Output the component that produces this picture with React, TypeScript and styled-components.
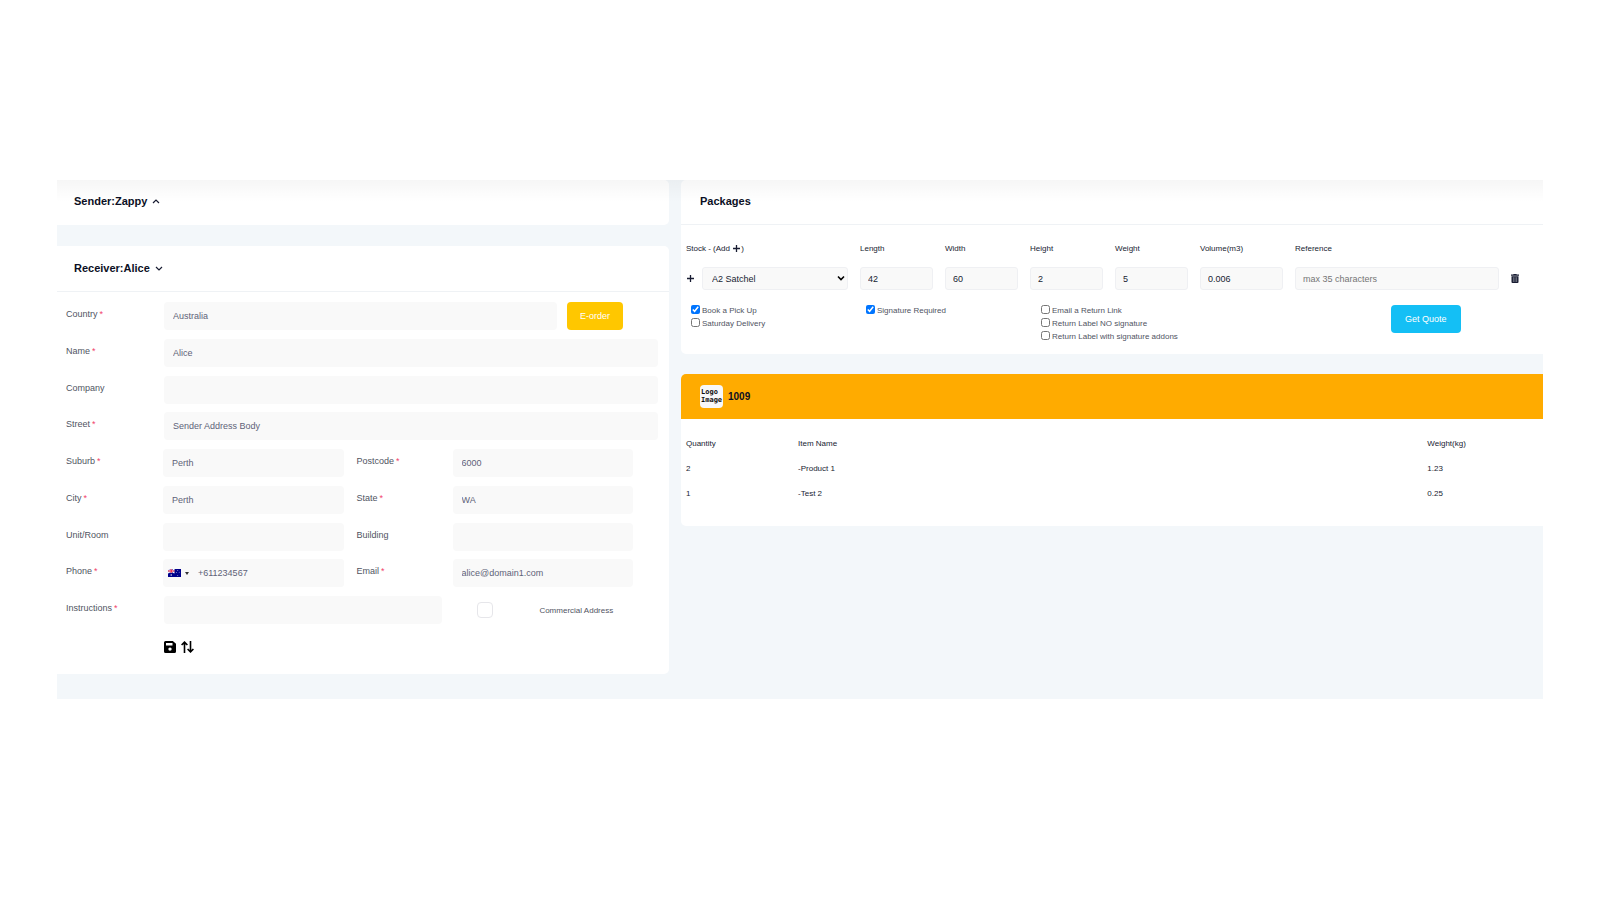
import React from 'react';
import styled, { createGlobalStyle } from 'styled-components';

const Global = createGlobalStyle`
  *, *::before, *::after { box-sizing: border-box; }
  body { margin: 0; background: #fff; font-family: "Liberation Sans", Arial, sans-serif; color: #181c32; }
  input, button, select { font-family: inherit; margin: 0; }
`;

const Page = styled.main`
  padding: 180px 57px 24px;
`;

const Board = styled.div`
  position: relative;
  display: grid;
  grid-template-columns: 612fr 862fr;
  align-items: start;
  gap: 12px;
  padding-bottom: 25px;
  background: #f3f7fa;
  &::before {
    content: "";
    position: absolute;
    inset: 0 0 auto 0;
    height: 22px;
    pointer-events: none;
    background: linear-gradient(rgba(0, 0, 0, 0.035), rgba(0, 0, 0, 0));
  }
`;

const Column = styled.div<{ $gap: number }>`
  display: flex;
  flex-direction: column;
  gap: ${(p) => p.$gap}px;
  min-width: 0;
`;

const Card = styled.section<{ $side: 'left' | 'right' }>`
  background: #fff;
  overflow: hidden;
  border-radius: ${(p) => (p.$side === 'left' ? '0 5px 5px 0' : '5px 0 0 5px')};
`;

const CardHeader = styled.header<{ $line?: boolean; $accent?: boolean; $inset?: number }>`
  display: flex;
  align-items: center;
  gap: 5px;
  min-height: 45px;
  padding: 0 ${(p) => p.$inset ?? 17}px ${(p) => (p.$accent ? 0 : 3)}px;
  background: ${(p) => (p.$accent ? '#ffab00' : 'transparent')};
  border-bottom: ${(p) => (p.$line ? '1px solid #eff2f5' : '0')};
`;

const ReceiverHeader = styled(CardHeader)`
  min-height: 46px;
  padding-bottom: 1px;
`;

const Title = styled.h2`
  margin: 0;
  font-size: 11px;
  line-height: 16px;
  font-weight: 700;
  color: #0b0f24;
`;

const IconButton = styled.button`
  display: inline-flex;
  align-items: center;
  justify-content: center;
  padding: 0;
  border: 0;
  background: none;
  color: #181c32;
`;

const Form = styled.form`
  display: flex;
  flex-direction: column;
  padding: 10px 11px 21px 9px;
`;

const Rows = styled.div`
  display: grid;
  align-content: space-between;
  min-height: 322px;
`;

const WideRow = styled.div`
  display: grid;
  grid-template-columns: 98px 1fr;
  height: 28px;
`;

const SplitRow = styled.div`
  display: grid;
  grid-template-columns: 97px 1fr 13px 96px 1fr;
  height: 28px;
  padding-right: 25px;
  & > :nth-child(3) { grid-column: 4; }
`;

const CountryLine = styled.div`
  display: grid;
  grid-template-columns: 393fr 91fr;
  gap: 10px;
`;

const InstructionLine = styled.div`
  display: grid;
  grid-template-columns: 279fr 181fr;
  gap: 35px;
`;

const Label = styled.label`
  font-size: 9px;
  line-height: 12px;
  padding-top: 6px;
  color: #50545f;
`;

const Star = styled.span`
  color: #f1416c;
  margin-left: 2px;
`;

const TextInput = styled.input`
  width: 100%;
  min-width: 0;
  height: 28px;
  padding: 0 9px;
  border: 0;
  border-radius: 4px;
  background: #f9f9f9;
  color: #5e6278;
  font-size: 9px;
  outline: 0;
`;

const PhoneBox = styled.div`
  display: flex;
  align-items: center;
  padding-left: 5px;
  border-radius: 4px;
  background: #f9f9f9;
`;

const FlagButton = styled(IconButton)`
  gap: 4px;
  flex: none;
`;

const SolidButton = styled.button<{ $color: string }>`
  height: 28px;
  padding: 0 13px;
  justify-self: start;
  border: 0;
  border-radius: 4px;
  background: ${(p) => p.$color};
  color: #fff;
  font-size: 9px;
`;

const QuoteButton = styled(SolidButton)`
  padding: 0 14px;
  margin-top: 1px;
`;

const CommercialLabel = styled.label`
  display: flex;
  align-items: center;
  gap: 46px;
  font-size: 8px;
  color: #50545f;
  white-space: nowrap;
`;

const SoftCheck = styled.input`
  appearance: none;
  width: 16px;
  height: 16px;
  margin: 0;
  border: 1px solid #e6e6ea;
  border-radius: 4px;
  background: #fff;
`;

const Actions = styled.div`
  display: flex;
  align-items: center;
  gap: 5px;
  padding: 17px 0 0 98px;
  & button { color: #000; }
`;

const PackageForm = styled.form`
  padding: 17px 24px 11px 5px;
`;

const PackageRow = styled.div`
  display: grid;
  grid-template-columns: 162fr 73fr 73fr 73fr 73fr 83fr 204fr 8px;
  gap: 12px;
  align-items: end;
`;

const Field = styled.div`
  display: flex;
  flex-direction: column;
  gap: 13px;
  min-width: 0;
`;

const FieldLabel = styled.label`
  display: flex;
  align-items: center;
  height: 12px;
  font-size: 8px;
  color: #181c32;
  white-space: nowrap;
`;

const FieldHead = styled.div`
  display: flex;
  align-items: center;
  gap: 1px;
  font-size: 8px;
`;

const BoxInput = styled.input`
  width: 100%;
  height: 23px;
  padding: 0 7px;
  border: 1px solid #eff0f3;
  border-radius: 3px;
  background: #f9f9f9;
  color: #181c32;
  font-size: 9px;
  outline: 0;
  &::placeholder { color: #757575; }
`;

const SelectLine = styled.div`
  display: grid;
  grid-template-columns: 8px 1fr;
  gap: 8px;
  align-items: center;
`;

const SelectWrap = styled.div`
  position: relative;
  & svg {
    position: absolute;
    right: 3px;
    top: 8px;
    pointer-events: none;
  }
`;

const Select = styled.select`
  display: block;
  appearance: none;
  width: 100%;
  height: 23px;
  padding: 0 9px;
  border: 1px solid #eff0f3;
  border-radius: 3px;
  background: #f9f9f9;
  color: #181c32;
  font-size: 9px;
`;

const TrashButton = styled(IconButton)`
  height: 23px;
`;

const Options = styled.div`
  display: grid;
  grid-template-columns: 175fr 175fr 350fr 128fr;
  align-items: start;
  padding: 14px 0 0 5px;
`;

const OptionList = styled.div`
  display: flex;
  flex-direction: column;
`;

const Option = styled.label`
  display: flex;
  align-items: center;
  gap: 2px;
  height: 13px;
  font-size: 8px;
  color: #50545f;
  white-space: nowrap;
  & input { width: 9px; height: 9px; margin: 0 0 2px; }
`;

const Logo = styled.span`
  width: 23px;
  height: 23px;
  padding: 3px 0 0 1px;
  overflow: hidden;
  border-radius: 4px;
  background: #f8f8f8;
  color: #111;
  font: 700 7px/8px "DejaVu Sans Mono", monospace;
`;

const OrderTitle = styled(Title)`
  font-size: 10px;
`;

const ItemTable = styled.table`
  width: 100%;
  margin: 12px 0 20px;
  border-collapse: collapse;
  table-layout: fixed;
  font-size: 8px;
  color: #181c32;
  & th, & td {
    height: 25px;
    padding: 0 0 0 5px;
    font-weight: 400;
    text-align: left;
  }
  & th:nth-child(1) { width: 13%; }
  & th:nth-child(3) { width: 14%; }
`;

const Chevron = ({ up }: { up?: boolean }) => (
  <svg width="8" height="8" viewBox="0 0 8 8" fill="none" stroke="currentColor" strokeWidth="1.2">
    <path d={up ? 'M1 6 4 3l3 3' : 'M1 3l3 3 3-3'} />
  </svg>
);

const Plus = () => (
  <svg width="7" height="7" viewBox="0 0 7 7" stroke="currentColor" strokeWidth="1.3">
    <path d="M3.5 0v7M0 3.5h7" />
  </svg>
);

const Flag = () => (
  <svg width="13" height="8" viewBox="0 0 13 8">
    <path fill="#00008b" d="M0 0h13v8H0z" />
    <path stroke="#fff" strokeWidth="1.2" d="M0 0l6.500 4M6.500 0 0 4" />
    <path stroke="#fff" strokeWidth="1.600" d="M3.200 0v4M0 2h6.500" />
    <path stroke="#e4002b" strokeWidth="0.900" d="M3.200 0v4M0 2h6.500" />
    <g fill="#fff">
      <circle cx="3.200" cy="6" r="0.700" />
      <circle cx="9.800" cy="1.500" r="0.400" />
      <circle cx="8.500" cy="3.500" r="0.400" />
      <circle cx="11.200" cy="3.200" r="0.400" />
      <circle cx="9.800" cy="6.500" r="0.400" />
    </g>
  </svg>
);

const Save = () => (
  <svg width="12" height="12" viewBox="0 0 12 12">
    <path
      fill="currentColor"
      fillRule="evenodd"
      d="M1.500 0h7.300L12 2.800v7.700A1.500 1.500 0 0 1 10.500 12h-9A1.500 1.500 0 0 1 0 10.500v-9A1.500 1.500 0 0 1 1.500 0zM2 2v2.600h6.500V2zM6 6.400a1.700 1.700 0 1 0 0 3.400 1.700 1.700 0 0 0 0-3.400z"
    />
  </svg>
);

const Swap = () => (
  <svg width="13" height="12" viewBox="0 0 13 12" fill="none" stroke="currentColor" strokeWidth="1.600">
    <path d="M3.500 12V1M.6 4 3.500 1.100 6.400 4M9.500 0v11M6.600 8l2.900 2.900L12.400 8" />
  </svg>
);

const Trash = () => (
  <svg width="8" height="9" viewBox="0 0 8 9">
    <path fill="currentColor" d="M2.600 0h2.800l.4.600H8v1.100H0V.6h2.200zM.5 2.200h7V8a1 1 0 0 1-1 1h-5a1 1 0 0 1-1-1z" />
    <path stroke="#a5a7ae" strokeWidth="0.600" d="M2.400 3.200V8M4 3.200V8M5.600 3.200V8" />
  </svg>
);

type Half = { id: string; label: string; required?: boolean; value?: string };

const halves: [Half, Half][] = [
  [{ id: 'suburb', label: 'Suburb', required: true, value: 'Perth' }, { id: 'postcode', label: 'Postcode', required: true, value: '6000' }],
  [{ id: 'city', label: 'City', required: true, value: 'Perth' }, { id: 'state', label: 'State', required: true, value: 'WA' }],
  [{ id: 'unit', label: 'Unit/Room' }, { id: 'building', label: 'Building' }],
  [{ id: 'phone', label: 'Phone', required: true, value: '+611234567' }, { id: 'email', label: 'Email', required: true, value: 'alice@domain1.com' }],
];

const wides: Half[] = [
  { id: 'name', label: 'Name', required: true, value: 'Alice' },
  { id: 'company', label: 'Company' },
  { id: 'street', label: 'Street', required: true, value: 'Sender Address Body' },
];

const dims = [
  ['Length', '42'],
  ['Width', '60'],
  ['Height', '2'],
  ['Weight', '5'],
  ['Volume(m3)', '0.006'],
];

const options: { text: string; on?: boolean }[][] = [
  [{ text: 'Book a Pick Up', on: true }, { text: 'Saturday Delivery' }],
  [{ text: 'Signature Required', on: true }],
  [{ text: 'Email a Return Link' }, { text: 'Return Label NO signature' }, { text: 'Return Label with signature addons' }],
];

const items = [
  ['2', '-Product 1', '1.23'],
  ['1', '-Test 2', '0.25'],
];

const FormLabel = ({ id, label, required }: Half) => (
  <Label htmlFor={id}>
    {label}
    {required && <Star>*</Star>}
  </Label>
);

export default function App() {
  return (
    <>
      <Global />
      <Page>
        <Board>
          <Column $gap={21}>
            <Card $side="left">
              <CardHeader>
                <Title>Sender:Zappy</Title>
                <IconButton type="button" aria-label="Expand sender"><Chevron up /></IconButton>
              </CardHeader>
            </Card>
            <Card $side="left">
              <ReceiverHeader $line>
                <Title>Receiver:Alice</Title>
                <IconButton type="button" aria-label="Collapse receiver"><Chevron /></IconButton>
              </ReceiverHeader>
              <Form>
                <Rows>
                  <WideRow>
                    <FormLabel id="country" label="Country" required />
                    <CountryLine>
                      <TextInput id="country" defaultValue="Australia" />
                      <SolidButton type="button" $color="#ffc700">E-order</SolidButton>
                    </CountryLine>
                  </WideRow>
                  {wides.map((w) => (
                    <WideRow key={w.id}>
                      <FormLabel {...w} />
                      <TextInput id={w.id} defaultValue={w.value} />
                    </WideRow>
                  ))}
                  {halves.map((pair) => (
                    <SplitRow key={pair[0].id}>
                      {pair.map((h) => (
                        <React.Fragment key={h.id}>
                          <FormLabel {...h} />
                          {h.id === 'phone' ? (
                            <PhoneBox>
                              <FlagButton type="button" aria-label="Country code">
                                <Flag />
                                <svg width="4" height="3" viewBox="0 0 4 3"><path d="M0 0h4L2 3z" fill="#333" /></svg>
                              </FlagButton>
                              <TextInput id={h.id} type="tel" defaultValue={h.value} />
                            </PhoneBox>
                          ) : (
                            <TextInput id={h.id} defaultValue={h.value} />
                          )}
                        </React.Fragment>
                      ))}
                    </SplitRow>
                  ))}
                  <WideRow>
                    <FormLabel id="instructions" label="Instructions" required />
                    <InstructionLine>
                      <TextInput id="instructions" />
                      <CommercialLabel>
                        <SoftCheck type="checkbox" />
                        Commercial Address
                      </CommercialLabel>
                    </InstructionLine>
                  </WideRow>
                </Rows>
                <Actions>
                  <IconButton type="button" aria-label="Save"><Save /></IconButton>
                  <IconButton type="button" aria-label="Swap"><Swap /></IconButton>
                </Actions>
              </Form>
            </Card>
          </Column>

          <Column $gap={20}>
            <Card $side="right">
              <CardHeader $line $inset={19}>
                <Title>Packages</Title>
              </CardHeader>
              <PackageForm>
                <PackageRow>
                  <Field>
                    <FieldHead>
                      <FieldLabel htmlFor="stock">Stock - (Add&nbsp;</FieldLabel>
                      <IconButton type="button" aria-label="Add stock"><Plus /></IconButton>)
                    </FieldHead>
                    <SelectLine>
                      <IconButton type="button" aria-label="Add row"><Plus /></IconButton>
                      <SelectWrap>
                        <Select id="stock"><option>A2 Satchel</option></Select>
                        <svg width="8" height="7" viewBox="0 0 8 7" fill="none" stroke="#000" strokeWidth="1.600">
                          <path d="M1 1.500l3 3 3-3" />
                        </svg>
                      </SelectWrap>
                    </SelectLine>
                  </Field>
                  {dims.map(([name, value]) => (
                    <Field key={name}>
                      <FieldLabel htmlFor={name}>{name}</FieldLabel>
                      <BoxInput id={name} defaultValue={value} />
                    </Field>
                  ))}
                  <Field>
                    <FieldLabel htmlFor="reference">Reference</FieldLabel>
                    <BoxInput id="reference" placeholder="max 35 characters" />
                  </Field>
                  <TrashButton type="button" aria-label="Delete row"><Trash /></TrashButton>
                </PackageRow>
                <Options>
                  {options.map((list) => (
                    <OptionList key={list[0].text}>
                      {list.map((o) => (
                        <Option key={o.text}>
                          <input type="checkbox" defaultChecked={o.on} />
                          {o.text}
                        </Option>
                      ))}
                    </OptionList>
                  ))}
                  <QuoteButton type="button" $color="#14bff5">Get Quote</QuoteButton>
                </Options>
              </PackageForm>
            </Card>

            <Card $side="right">
              <CardHeader $accent $inset={19}>
                <Logo>Logo Image</Logo>
                <OrderTitle>1009</OrderTitle>
              </CardHeader>
              <ItemTable>
                <thead>
                  <tr><th>Quantity</th><th>Item Name</th><th>Weight(kg)</th></tr>
                </thead>
                <tbody>
                  {items.map((row) => (
                    <tr key={row[1]}>{row.map((cell) => <td key={cell}>{cell}</td>)}</tr>
                  ))}
                </tbody>
              </ItemTable>
            </Card>
          </Column>
        </Board>
      </Page>
    </>
  );
}
